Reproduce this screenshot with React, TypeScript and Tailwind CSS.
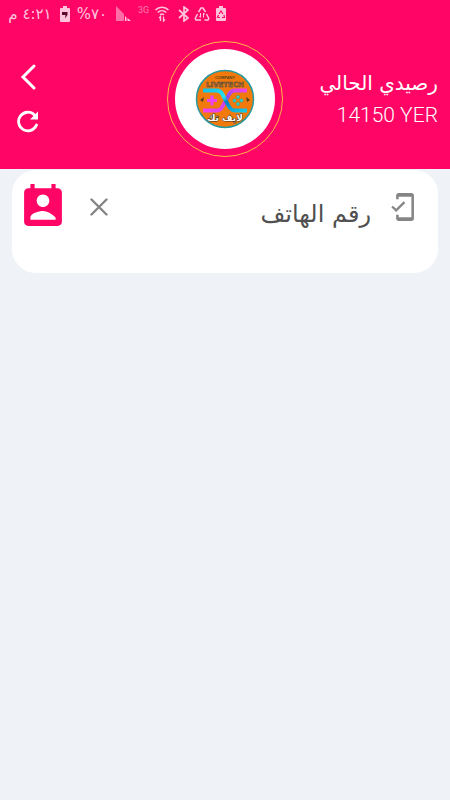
import React from 'react';

const StatusBar = () => {
  return (
    <div className="flex h-7 items-center pl-2 text-[#ffc4dc]">
      <span dir="rtl" className="w-11 whitespace-nowrap text-center font-['DejaVu_Sans',sans-serif] text-[15px]">٤:٢١ م</span>
      <svg className="ml-2 h-4 w-2.5" viewBox="0 0 10 16" fill="currentColor">
        <path d="M3 0h4v2h2a1 1 0 0 1 1 1v12a1 1 0 0 1-1 1H1a1 1 0 0 1-1-1V3a1 1 0 0 1 1-1h2z" />
        <path d="M2 6h5.500v3L5 12.500 5.500 9H2z" fill="#5c0a2b" />
      </svg>
      <span dir="ltr" className="ml-1.5 w-8 whitespace-nowrap text-center font-['DejaVu_Sans',sans-serif] text-[15px]">%٧٠</span>
      <svg className="ml-2 h-4 w-4" viewBox="0 0 16 16" fill="currentColor">
        <path d="M0 0l8 8v7H0z" opacity=".55" />
        <path d="M9 10l1.500 1.500V15H9zM11.500 12l3.500 3h-3.500z" />
      </svg>
      <span className="ml-1.5 mb-2 w-3 font-['Roboto',sans-serif] text-[9px] leading-none opacity-60">3G</span>
      <svg className="ml-1 h-4 w-4" viewBox="0 0 16 16" fill="none" stroke="currentColor" strokeWidth="1.6">
        <path d="M1.500 4C5 .3 11 .3 14.500 4M3.700 6.500c2.500-2.400 6-2.400 8.600 0M6 8.800c1.300-1 2.700-1 4 0" />
        <path d="M6.500 15v-4.500L5 12M9.500 10.500V15l1.500-1.500" strokeWidth="1.300" />
      </svg>
      <svg className="ml-2 h-4 w-3" viewBox="0 0 12 16" fill="none" stroke="currentColor" strokeWidth="1.7">
        <path d="M1 4l9 8-4 3V1l4 3-9 8" />
      </svg>
      <svg className="ml-1 h-4 w-4" viewBox="0 0 16 16" fill="none" stroke="currentColor" strokeWidth="1.500">
        <path d="M4.500 6L7 2h2l2.500 4M12.500 8l2.300 4.500-.8 1.500h-3.500M7 14H2l-.8-1.500L3.500 8" />
        <path d="M6.500 7v4.500M9.500 7v4.500M5.500 10l1 1.500M10.500 8.500l-1-1.500" strokeWidth="1.100" />
      </svg>
      <svg className="ml-1.5 h-4 w-2.5" viewBox="0 0 10 16" fill="currentColor">
        <path d="M3 0h4v2h2a1 1 0 0 1 1 1v11a1 1 0 0 1-1 1H1a1 1 0 0 1-1-1V3a1 1 0 0 1 1-1h2z" />
        <path d="M3 8l2-3 2 3M8 9l.5 2.500H6M4 11.500H1.500L2.500 9" fill="none" stroke="#ff0566" strokeWidth="1.200" />
      </svg>
    </div>
  );
};

const Logo = () => {
  return (
    <div className="flex size-[116px] items-center justify-center rounded-full border border-[#ffb547]">
      <div className="flex size-[100px] items-center justify-center rounded-full bg-white">
        <svg className="size-[60px]" viewBox="0 0 60 60" role="img" aria-label="Livetech">
          <defs>
            <linearGradient id="cyan" x1="0" y1="0" x2="1" y2="1">
              <stop offset="0" stopColor="#12c4ea" />
              <stop offset=".4" stopColor="#28e4f5" />
              <stop offset=".55" stopColor="#087fc0" />
              <stop offset="1" stopColor="#16caea" />
            </linearGradient>
            <linearGradient id="violet" x1="0" y1="1" x2="1" y2="0">
              <stop offset="0" stopColor="#f443ef" />
              <stop offset=".45" stopColor="#c944e8" />
              <stop offset=".6" stopColor="#8f4fe0" />
              <stop offset="1" stopColor="#f344ec" />
            </linearGradient>
          </defs>
          <circle cx="30" cy="30" r="28.500" fill="#f27a0c" stroke="#2599a0" strokeWidth="1.500" />
          <text x="30" y="10" textAnchor="middle" fontSize="4" fontWeight="700" fill="#54401e" fontFamily="Liberation Sans, sans-serif">COMPANY</text>
          <text x="30" y="18" textAnchor="middle" fontSize="7" fontWeight="700" fill="#c9701c" stroke="#44484a" strokeWidth=".5" fontFamily="DejaVu Sans, sans-serif">LIVETECH</text>
          <path d="M8 41.500h14c3 0 4-1 5.500-4L34 25.500c1.500-3 3-4 6-4h12" fill="none" stroke="url(#violet)" strokeWidth="3.800" />
          <path d="M8 21.500h14c3 0 4 1 5.500 4L34 37.500c1.500 3 3 4 6 4h12" fill="none" stroke="url(#cyan)" strokeWidth="3.800" />
          <path d="M17 26.500v10M12 31.500h10" stroke="#ed42ef" strokeWidth="3.200" />
          <g fill="#2bd5cf" stroke="#36847c" strokeWidth=".4">
            <circle cx="43" cy="28" r="1.700" />
            <circle cx="43" cy="35" r="1.700" />
            <circle cx="39.500" cy="31.500" r="1.700" />
            <circle cx="46.500" cy="31.500" r="1.700" />
          </g>
          <path d="M5 31l4-3-1 5zM55 31l-4-3 1 5z" fill="#51401f" />
          <text x="30" y="52" textAnchor="middle" fontSize="9" fontWeight="700" fill="#fff" stroke="#3b3426" strokeWidth="1" paintOrder="stroke" fontFamily="DejaVu Sans, sans-serif">لايف تك</text>
        </svg>
      </div>
    </div>
  );
};

const Header = () => {
  return (
    <header className="bg-[#ff0566] pb-3 text-white">
      <StatusBar />
      <div className="grid grid-cols-[1fr_auto_1fr] items-center px-3 pt-[13px]">
        <div className="flex flex-col items-start gap-[18px] pb-0.5 pl-1">
          <button type="button" aria-label="رجوع" className="flex h-7 w-6 items-center justify-center">
            <svg className="h-7 w-5" viewBox="0 0 20 28" fill="none" stroke="currentColor" strokeWidth="3" strokeLinecap="round">
              <path d="M16 3L5 14l11 11" />
            </svg>
          </button>
          <button type="button" aria-label="تحديث">
            <svg className="size-6" viewBox="0 0 24 24" fill="none" stroke="currentColor" strokeWidth="2.800" strokeLinecap="round">
              <path d="M20.500 16A9.300 9.300 0 1 1 18.500 6" />
              <path d="M22 2.500v8h-8z" fill="currentColor" stroke="none" />
            </svg>
          </button>
        </div>
        <Logo />
        <div className="whitespace-nowrap text-right">
          <p dir="rtl" className="font-['DejaVu_Sans',sans-serif] text-xl leading-8">رصيدي الحالي</p>
          <p className="font-['Roboto',sans-serif] text-[21px] font-light leading-8">14150 YER</p>
        </div>
      </div>
    </header>
  );
};

const PhoneCard = () => {
  return (
    <section className="mx-3 mt-px flex items-start rounded-3xl bg-white px-3 pt-3.5 pb-[39px]">
      <button type="button" aria-label="جهات الاتصال" className="shrink-0 text-[#ff0566]">
        <svg className="h-[42px] w-[38px]" viewBox="3 1 18 20" fill="currentColor">
          <path d="M19 3h-1V1h-2v2H8V1H6v2H5c-1.110 0-2 .9-2 2v14c0 1.100.89 2 2 2h14c1.100 0 2-.9 2-2V5c0-1.100-.9-2-2-2zm-7 3c1.660 0 3 1.340 3 3s-1.340 3-3 3-3-1.340-3-3 1.340-3 3-3zm6 12H6v-1c0-2 4-3.100 6-3.100s4 1.100 6 3.100v1z" />
        </svg>
      </button>
      <button type="button" aria-label="مسح" className="ml-7 mt-3.5 shrink-0 text-[#858585]">
        <svg className="size-[18px]" viewBox="0 0 18 18" fill="none" stroke="currentColor" strokeWidth="2.400" strokeLinecap="round">
          <path d="M1.500 1.500l15 15M16.500 1.500l-15 15" />
        </svg>
      </button>
      <input
        type="tel"
        dir="rtl"
        aria-label="رقم الهاتف"
        placeholder="رقم الهاتف"
        className="mt-2.5 h-10 min-w-0 flex-1 bg-transparent text-right font-['DejaVu_Sans',sans-serif] text-2xl text-[#505050] outline-none placeholder:text-[#505050] placeholder:opacity-100"
      />
      <svg className="ml-5 mr-3 mt-[9px] h-7 w-[23px] shrink-0 text-[#858585]" viewBox="3 1 18 22" fill="currentColor">
        <path d="M19 1H9c-1.100 0-2 .9-2 2v3h2V4h10v16H9v-2H7v3c0 1.100.9 2 2 2h10c1.100 0 2-.9 2-2V3c0-1.100-.9-2-2-2zM7.010 13.470l-2.550-2.550-1.270 1.270L7 16l7.190-7.190-1.270-1.270z" />
      </svg>
    </section>
  );
};

const App = () => {
  return (
    <main className="min-h-screen bg-[#eff3f8]">
      <Header />
      <PhoneCard />
    </main>
  );
};

export default App;
